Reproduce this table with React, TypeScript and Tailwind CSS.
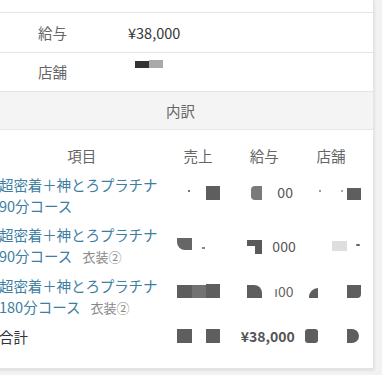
import React from 'react';

const font = { fontFamily: '"Noto Sans CJK JP", "Noto Sans", sans-serif' };

function Patch({ className }: { className: string }) {
  return <span className={`absolute block ${className}`} />;
}

interface ItemRow {
  name: string;
  course: string;
  extra?: string;
  sales: React.ReactNode;
  pay: React.ReactNode;
  shop: React.ReactNode;
}

const rows: ItemRow[] = [
  {
    name: '超密着＋神とろプラチナ',
    course: '90分コース',
    sales: (
      <>
        <Patch className="left-[23px] top-[16px] w-[2px] h-[2px] bg-[#777]" />
        <Patch className="left-[41px] top-[12px] w-[14px] h-[14px] bg-[#5e5e5e]" />
      </>
    ),
    pay: (
      <>
        <Patch className="left-[20px] top-[12px] w-[11px] h-[14px] bg-[#7a7a7a] rounded-l-[4px]" />
        <span className="absolute left-[46px] top-[8px] text-[14px] leading-[21px] text-[#555]">00</span>
      </>
    ),
    shop: (
      <>
        <Patch className="left-[22px] top-[16px] w-[2px] h-[2px] bg-[#999]" />
        <Patch className="left-[44px] top-[16px] w-[2px] h-[2px] bg-[#aaa]" />
        <Patch className="left-[50px] top-[14px] w-[14px] h-[12px] bg-[#5e5e5e]" />
      </>
    ),
  },
  {
    name: '超密着＋神とろプラチナ',
    course: '90分コース',
    extra: '衣装②',
    sales: (
      <>
        <Patch className="left-[12px] top-[14px] w-[15px] h-[12px] bg-[#666] rounded-bl-[8px]" />
        <Patch className="left-[37px] top-[23px] w-[3px] h-[2px] bg-[#888]" />
      </>
    ),
    pay: (
      <>
        <Patch className="left-[16px] top-[16px] w-[15px] h-[6px] bg-[#5a5a5a]" />
        <Patch className="left-[24px] top-[22px] w-[7px] h-[8px] bg-[#5a5a5a]" />
        <span className="absolute left-[41px] top-[12px] text-[14px] leading-[21px] text-[#555]">000</span>
      </>
    ),
    shop: (
      <>
        <Patch className="left-[35px] top-[17px] w-[15px] h-[10px] bg-[#dedede]" />
        <Patch className="left-[59px] top-[20px] w-[4px] h-[2px] bg-[#666] rounded-full" />
      </>
    ),
  },
  {
    name: '超密着＋神とろプラチナ',
    course: '180分コース',
    extra: '衣装②',
    sales: (
      <>
        <Patch className="left-[12px] top-[10px] w-[15px] h-[13px] bg-[#5e5e5e]" />
        <Patch className="left-[27px] top-[10px] w-[14px] h-[13px] bg-[#727272]" />
        <Patch className="left-[41px] top-[9px] w-[14px] h-[14px] bg-[#5e5e5e]" />
      </>
    ),
    pay: (
      <>
        <Patch className="left-[16px] top-[10px] w-[15px] h-[13px] bg-[#5e5e5e] rounded-tr-[8px]" />
        <span className="absolute left-[43px] top-[6px] text-[14px] leading-[21px] text-[#666]">ı00</span>
      </>
    ),
    shop: (
      <>
        <Patch className="left-[12px] top-[13px] w-[9px] h-[10px] bg-[#5e5e5e] rounded-tl-[9px]" />
        <Patch className="left-[50px] top-[10px] w-[14px] h-[13px] bg-[#5e5e5e] rounded-br-[4px]" />
      </>
    ),
  },
];

export default function App() {
  return (
    <div className="w-[382px] h-[375px] overflow-hidden bg-[#f2f2f2]" style={font}>
      <div className="ml-[-12px] w-[386px] bg-white border-r border-b border-[#e4e4e4] shadow-[0_1px_3px_rgba(0,0,0,0.12)] pb-[17px]">
        <div className="h-[13px] border-b border-[#e6e6e6]" />

        {/* Summary */}
        <div className="h-[40px] flex items-center border-b border-[#e6e6e6] text-[14.5px]">
          <span className="pl-[50px] w-[140px] text-[#666]">給与</span>
          <span className="text-[#333]">¥38,000</span>
        </div>
        <div className="h-[39px] flex items-center border-b border-[#e6e6e6] text-[14.5px]">
          <span className="pl-[50px] w-[140px] text-[#666]">店舗</span>
          <span className="relative block w-[30px] h-[20px]">
            <Patch className="left-[7px] top-[-1px] w-[14px] h-[7px] bg-[#333]" />
            <Patch className="left-[21px] top-[-2px] w-[14px] h-[8px] bg-[#a9a9a9]" />
          </span>
        </div>
        <div className="h-[38px] flex items-center justify-center bg-[#f4f4f4] border-b border-[#e6e6e6] text-[14.5px] text-[#666]">
          内訳
        </div>

        {/* Breakdown table */}
        <div className="pl-[11px] pr-[8px] pt-[13px]">
          <div className="flex h-[27px] items-center pb-[2px] text-[14.5px] text-[#666]">
            <span className="w-[166px] text-center">項目</span>
            <span className="w-[67px] text-center">売上</span>
            <span className="w-[66px] text-center">給与</span>
            <span className="w-[68px] text-center">店舗</span>
          </div>

          {rows.map((r, i) => (
            <div key={i} className="flex py-1">
              <div className="w-[166px] text-[14.5px] leading-[21px] text-[#3d7ea3]">
                <div className="tracking-[-0.1px]">{r.name}</div>
                <div>
                  {r.course}
                  {r.extra && <span className="ml-[10px] text-[13px] text-[#888]">{r.extra}</span>}
                </div>
              </div>
              <div className="relative w-[67px]">{r.sales}</div>
              <div className="relative w-[66px]">{r.pay}</div>
              <div className="relative w-[68px]">{r.shop}</div>
            </div>
          ))}

          <div className="flex py-1 h-[29px]">
            <div className="w-[166px] text-[14.5px] leading-[21px] text-[#333]">合計</div>
            <div className="relative w-[67px]">
              <Patch className="left-[12px] top-[3px] w-[15px] h-[14px] bg-[#5e5e5e]" />
              <Patch className="left-[41px] top-[3px] w-[14px] h-[14px] bg-[#5e5e5e]" />
            </div>
            <div className="relative w-[66px] flex justify-center">
              <span className="ml-[7px] text-[14px] leading-[21px] font-semibold text-[#555]">¥38,000</span>
            </div>
            <div className="relative w-[68px]">
              <Patch className="left-[8px] top-[3px] w-[13px] h-[14px] bg-[#5e5e5e] rounded-[3px]" />
              <Patch className="left-[50px] top-[3px] w-[12px] h-[14px] bg-[#5e5e5e] rounded-r-[7px]" />
            </div>
          </div>
        </div>
      </div>
    </div>
  );
}
